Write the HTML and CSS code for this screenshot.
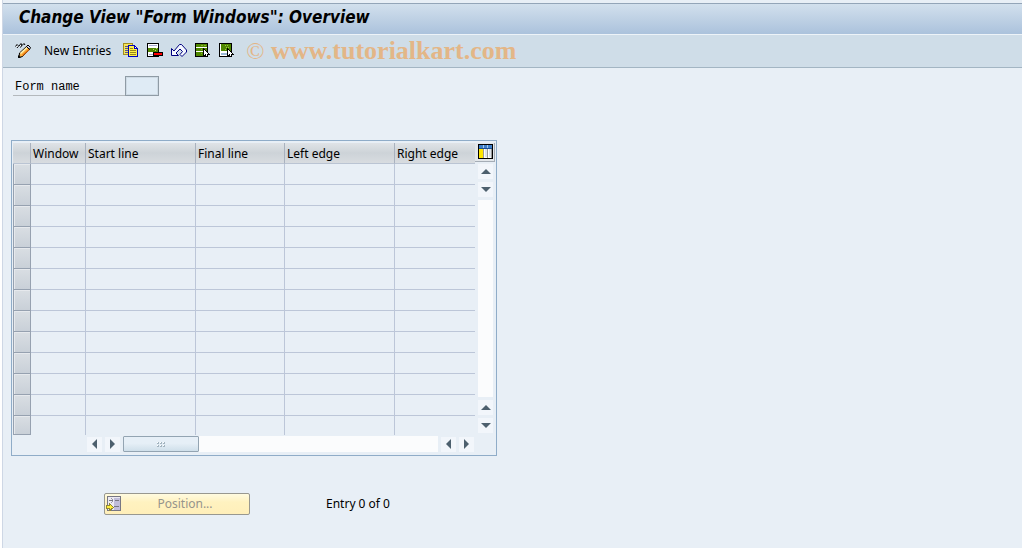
FILE: index.html
```
<!DOCTYPE html>
<html lang="en">
<head>
    <meta charset="UTF-8">
    <title>Change View "Form Windows": Overview</title>
    <link rel="stylesheet" href="styles.css">
</head>
<body>
    <div class="screen">
        <header class="title-bar">
            <h1>Change View "Form Windows": Overview</h1>
        </header>

        <div class="toolbar">
            <button type="button" aria-label="Display / Change">
                <svg width="16" height="16" viewBox="0 0 16 16">
                    <path d="M.5 3.500L2 1.500L3.500 3L2 5M4 3L6 .5L7 2L5.500 4.500M7 2.500L9 .5L10 2" stroke="#000"/>
                    <path d="M1.500 3.500L3 3M5 2L6 3" stroke="#fff"/>
                    <path d="M4.500 10L11.500 3.500L14.500 6.500L7.500 13.500L4 14.500Z" fill="#ffb03c" stroke="#000"/>
                    <path d="M5.500 10.500L12 4.500" stroke="#fff3b0" stroke-width="1.500"/>
                    <path d="M7.500 12.500L14 6.500" stroke="#e07010" stroke-width="1.500"/>
                    <path d="M11.500 3.500L13 2L15.500 4.500L14.500 6.500Z" fill="#c8c8e0" stroke="#000"/>
                    <path d="M3 15V12L6 14.500Z" fill="#000"/>
                </svg>
            </button>
            <button type="button" class="text-btn">New Entries</button>
            <button type="button" aria-label="Copy">
                <svg width="16" height="16" viewBox="0 0 16 16" shape-rendering="crispEdges">
                    <path d="M0 0H10V12H0Z" fill="#f6e45c"/>
                    <path d="M.5 0V12M0 .5H10M0 11.500H5M9.500 0V3" stroke="#a29020"/>
                    <path d="M2 3.500H5M2 5.500H5M2 7.500H5M2 9.500H5" stroke="#55558c"/>
                    <path d="M5 2H12V3H13V4H14V5H15V14H5Z" fill="#0000c0"/>
                    <path d="M6 3H11V6H14V13H6Z" fill="#fff047"/>
                    <path d="M12 4H13V5H12Z" fill="#fff"/>
                    <path d="M7 5.500H10M7 7.500H13M7 9.500H13M7 11.500H13" stroke="#98861c"/>
                </svg>
            </button>
            <button type="button" aria-label="Delete">
                <svg width="16" height="16" viewBox="0 0 16 16" shape-rendering="crispEdges">
                    <path d="M0 0H12V14H0Z" fill="#000"/>
                    <path d="M1 1H11V13H1Z" fill="#fff"/>
                    <path d="M2 2.500H10M2 11.500H7" stroke="#a7aad0"/>
                    <path d="M1 5H11V9H1Z" fill="#4f8700"/>
                    <path d="M6 6H7V7H6ZM8 7H9V8H8ZM9 5H10V6H9Z" fill="#b9d56a"/>
                    <path d="M6 9H16V13H6Z" fill="#000"/>
                    <path d="M7 10H15V12H7Z" fill="#f00"/>
                </svg>
            </button>
            <button type="button" aria-label="Undo">
                <svg width="16" height="16" viewBox="0 0 16 16">
                    <path d="M.5 5.500V12.500H7.500L5 10L9 6L11.500 8.500L9 11.500L11 13.500L15.500 9V7L10.500 1.500H8.500L3 8Z" fill="#f5f8ff" stroke="#000080"/>
                </svg>
            </button>
            <button type="button" aria-label="Select All">
                <svg width="16" height="16" viewBox="0 0 16 16" shape-rendering="crispEdges">
                    <path d="M0 0H13V14H0Z" fill="#000"/>
                    <path d="M1 1H12V13H1Z" fill="#fff"/>
                    <path d="M1 1H12V4H1ZM1 5H12V8H1ZM1 9H12V13H1Z" fill="#4f8700"/>
                    <path d="M6 2H8V3H6ZM9 2H11V3H9ZM6 6H7V7H6ZM6 10H7V11H6Z" fill="#8ab52c"/>
                    <path d="M8 5H9V6H10V7H11V8H12V9H13V10H14V11H15V12H13V14H11V13H10V14H8Z" fill="#000"/>
                    <path d="M9 7H10V8H11V9H12V10H13V11H12V13H11V11H10V12H9Z" fill="#fff"/>
                </svg>
            </button>
            <button type="button" aria-label="Select Block">
                <svg width="16" height="16" viewBox="0 0 16 16" shape-rendering="crispEdges">
                    <path d="M0 0H13V14H0Z" fill="#000"/>
                    <path d="M1 1H12V13H1Z" fill="#fff"/>
                    <path d="M2 1H12V8H2Z" fill="#4f8700"/>
                    <path d="M6 2H7V3H6ZM8 2H9V3H8ZM7 4H8V5H7ZM9 4H10V5H9ZM6 6H7V7H6Z" fill="#a0c648"/>
                    <path d="M2 10H11V12H2Z" fill="#9bb9d6"/>
                    <path d="M8 5H9V6H10V7H11V8H12V9H13V10H14V11H15V12H13V14H11V13H10V14H8Z" fill="#000"/>
                    <path d="M9 7H10V8H11V9H12V10H13V11H12V13H11V11H10V12H9Z" fill="#fff"/>
                </svg>
            </button>
            <p class="watermark"><span>©</span> www.tutorialkart.com</p>
        </div>

        <main>
            <div class="field">
                <label for="formName">Form name</label>
                <input type="text" id="formName">
            </div>

            <section class="grid-box">
                <table>
                    <thead>
                        <tr>
                            <th class="sel"></th>
                            <th class="window">Window</th>
                            <th class="line">Start line</th>
                            <th class="final">Final line</th>
                            <th class="line">Left edge</th>
                            <th class="last">Right edge</th>
                        </tr>
                    </thead>
                    <tbody>
                        <tr><td class="sel"></td><td></td><td></td><td></td><td></td><td></td></tr>
                        <tr><td class="sel"></td><td></td><td></td><td></td><td></td><td></td></tr>
                        <tr><td class="sel"></td><td></td><td></td><td></td><td></td><td></td></tr>
                        <tr><td class="sel"></td><td></td><td></td><td></td><td></td><td></td></tr>
                        <tr><td class="sel"></td><td></td><td></td><td></td><td></td><td></td></tr>
                        <tr><td class="sel"></td><td></td><td></td><td></td><td></td><td></td></tr>
                        <tr><td class="sel"></td><td></td><td></td><td></td><td></td><td></td></tr>
                        <tr><td class="sel"></td><td></td><td></td><td></td><td></td><td></td></tr>
                        <tr><td class="sel"></td><td></td><td></td><td></td><td></td><td></td></tr>
                        <tr><td class="sel"></td><td></td><td></td><td></td><td></td><td></td></tr>
                        <tr><td class="sel"></td><td></td><td></td><td></td><td></td><td></td></tr>
                        <tr><td class="sel"></td><td></td><td></td><td></td><td></td><td></td></tr>
                        <tr><td class="sel"></td><td></td><td></td><td></td><td></td><td></td></tr>
                    </tbody>
                </table>

                <div class="side">
                    <button type="button" class="config" aria-label="Table Settings">
                        <svg width="15" height="15" viewBox="0 0 15 15" shape-rendering="crispEdges">
                            <path d="M0 0H15V15H0Z" fill="#000"/>
                            <path d="M1 1H14V14H1Z" fill="#fff"/>
                            <path d="M1 1H14V4H1Z" fill="#3f7fc8"/>
                            <path d="M1 4H14V5H1Z" fill="#1d4f91"/>
                            <path d="M1 5H5V14H1Z" fill="#ffe600"/>
                            <path d="M5 5H6V14H5ZM9 5H10V14H9ZM13 5H14V14H13Z" fill="#999"/>
                            <path d="M7 5H9V13H7ZM11 5H13V13H11Z" fill="#dde4ea"/>
                            <path d="M5 1H6V4H5ZM9 1H10V4H9Z" fill="#a8caec"/>
                        </svg>
                    </button>
                    <div class="v-scroll">
                        <button type="button" class="arrow up" aria-label="Scroll up"></button>
                        <button type="button" class="arrow down" aria-label="Scroll down"></button>
                        <div class="track"></div>
                        <button type="button" class="arrow up" aria-label="Page up"></button>
                        <button type="button" class="arrow down" aria-label="Page down"></button>
                    </div>
                </div>

                <div class="h-scroll">
                    <button type="button" class="arrow left" aria-label="Scroll left"></button>
                    <button type="button" class="arrow right" aria-label="Scroll right"></button>
                    <div class="track">
                        <div class="thumb">
                            <svg width="8" height="5" viewBox="0 0 8 5" shape-rendering="crispEdges">
                                <path d="M0 0H2V2H0ZM3 0H5V2H3ZM6 0H8V2H6ZM0 3H2V5H0ZM3 3H5V5H3ZM6 3H8V5H6Z" fill="#fff"/>
                                <path d="M1 0H2V2H0V1H1ZM4 0H5V2H3V1H4ZM7 0H8V2H6V1H7ZM1 3H2V5H0V4H1ZM4 3H5V5H3V4H4ZM7 3H8V5H6V4H7Z" fill="#a3b4c0"/>
                            </svg>
                        </div>
                    </div>
                    <button type="button" class="arrow left" aria-label="Page left"></button>
                    <button type="button" class="arrow right" aria-label="Page right"></button>
                </div>
            </section>

            <div class="footer">
                <button type="button" class="position" disabled>
                    <svg width="16" height="16" viewBox="0 0 16 16" shape-rendering="crispEdges">
                        <path d="M1 0H15V15H1Z" fill="#777783"/>
                        <path d="M2 1H14V14H2Z" fill="#eceaf2"/>
                        <path d="M8 2H14V14H8Z" fill="#c0bdda"/>
                        <path d="M3 4.500H7M9 4.500H13M8 10.500H13" stroke="#777783"/>
                        <path d="M5 2.500H6M6 3.500H7M6 5.500H7M5 6.500H6" stroke="#9a9aa5"/>
                        <path d="M0 9H3V7H4V8H5V9H6V10H7V11H8V12H7V13H6V14H5V15H3V13H0Z" fill="#8f8636"/>
                        <path d="M1 10H4V9H5V10H6V11H7V12H5V13H4V12H1Z" fill="#ffee3c"/>
                    </svg>
                    <span>Position...</span>
                </button>
                <p>Entry 0 of 0</p>
            </div>
        </main>
    </div>
</body>
</html>
```

FILE: styles.css
```
*{
    margin: 0;
    padding: 0;
    box-sizing: border-box;
}

body{
    background: #fff;
    color: #000;
    font: 12px/16px "Noto Sans", Tahoma, sans-serif;
}

button{
    border: none;
    background: none;
    font: inherit;
    color: inherit;
}

svg{
    display: block;
    fill: none;
}

.screen{
    min-height: 100vh;
    margin-left: 2px;
    padding-top: 3px;
    border-left: 1px solid #ced7e5;
    background: #e8eff6;
}

.title-bar{
    height: 31px;
    padding-left: 16px;
    border-top: 1px solid #93a5b8;
    background: linear-gradient(#d2e0ed, #abc2dc);
}

.title-bar h1{
    font: italic bold 17px/27px "DejaVu Sans Condensed", "DejaVu Sans", Tahoma, sans-serif;
}

/* toolbar */
.toolbar{
    display: flex;
    align-items: center;
    gap: 8px;
    height: 34px;
    padding: 0 12px;
    border-top: 1px solid #edf3f8;
    border-bottom: 1px solid #a3b5c3;
    background: #cfdde8;
}

.toolbar .text-btn{
    margin: 0 4px 0 5px;
    white-space: nowrap;
}

.watermark{
    margin-left: 3px;
    color: #e3b687;
    font: bold 26px/32px "Liberation Serif", serif;
    white-space: nowrap;
}

.watermark span{
    font-size: 24px;
    font-weight: normal;
}

/* content */
main{
    padding: 8px;
}

.field{
    display: flex;
    width: 146px;
    margin-left: 2px;
}

.field label{
    flex: 1;
    padding: 3px 0 0 2px;
    border-bottom: 1px solid #b4b9bd;
    font: 12px/16px "Liberation Mono", monospace;
}

.field input{
    width: 34px;
    height: 20px;
    border: 1px solid #8f9ba5;
    background: #dfebf5;
    box-shadow: inset 0 0 0 1px #cfdbe5;
}

.grid-box{
    display: grid;
    grid-template-columns: auto 20px;
    row-gap: 1px;
    width: max-content;
    margin-top: 44px;
    padding: 2px 1px 3px;
    border: 1px solid #8facc8;
}

table{
    border-collapse: separate;
    border-spacing: 0;
    table-layout: fixed;
    width: 462px;
}

th{
    height: 21px;
    padding: 1px 0 0 2px;
    border-right: 1px solid #a9b2bf;
    border-bottom: 1px solid #bac4d3;
    background: linear-gradient(#dfe3e7, #cdd3d8 50%, #d8dce0);
    font-weight: normal;
    text-align: left;
    white-space: nowrap;
}

td{
    height: 21px;
    border-right: 1px solid #bcc6d8;
    border-bottom: 1px solid #bcc6d8;
}

tr > :last-child{
    border-right: none;
}

tbody tr:last-child td{
    height: 19px;
    border-bottom: none;
}

.sel{
    width: 18px;
}

td.sel,
tbody tr:last-child td.sel{
    border: 1px solid #96a1b0;
    border-top: none;
    background: linear-gradient(#d9dee3, #c9d0d8);
    box-shadow: inset 1px 1px 0 #e6e9ed;
}

.window{
    width: 55px;
}

.line{
    width: 110px;
}

.final{
    width: 89px;
}

.last{
    width: 80px;
}

/* scrollbars */
.side{
    display: flex;
    flex-direction: column;
}

.config{
    padding: 1px 1px 2px 3px;
    border-right: 1px solid #a5adb6;
    border-bottom: 1px solid #a5adb6;
    background: #e3e7eb;
}

.v-scroll{
    display: flex;
    flex: 1;
    flex-direction: column;
    gap: 3px;
    padding: 2px 2px 2px 3px;
}

.h-scroll{
    display: flex;
    align-items: center;
    gap: 3px;
    padding: 0 1px 0 74px;
}

.track{
    flex: 1;
    background: #fbfcfd;
}

.arrow{
    display: grid;
    place-items: center;
    width: 15px;
    height: 15px;
    background: #f2f6fb;
}

.arrow::before{
    content: "";
    border: 5px solid transparent;
}

.up::before{
    border-top: none;
    border-bottom-color: #4d606e;
}

.down::before{
    border-bottom: none;
    border-top-color: #4d606e;
}

.left::before{
    border-left: none;
    border-right-color: #4d606e;
}

.right::before{
    border-right: none;
    border-left-color: #4d606e;
}

.thumb{
    display: grid;
    place-items: center;
    width: 76px;
    height: 16px;
    border: 1px solid #93a4b2;
    border-radius: 1px;
    background: linear-gradient(#e6eff7 45%, #cfdfea);
}

/* footer */
.footer{
    display: flex;
    align-items: center;
    margin: 37px 0 0 93px;
}

.position{
    display: flex;
    align-items: center;
    width: 146px;
    height: 22px;
    padding: 0 1px;
    border: 1px solid #989890;
    border-radius: 2px;
    background: linear-gradient(#fffbe0, #fff2c0 40%, #ffefba);
    color: #96948c;
}

.position span{
    flex: 1;
}

.footer p{
    margin-left: 76px;
}
```
